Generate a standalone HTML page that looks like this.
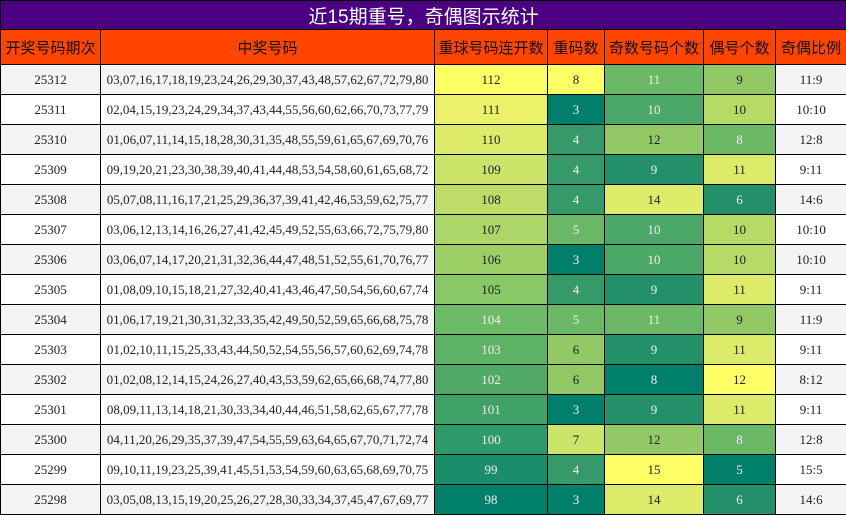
<!DOCTYPE html><html><head><meta charset="utf-8"><style>
body{margin:0;width:846px;height:515px;overflow:hidden;background:#fff}
table{border-collapse:collapse;table-layout:fixed;width:846px;font-family:"Liberation Serif","Noto Serif CJK SC",serif;font-size:13px}
td,th{border:1px solid #000;text-align:center;padding:0;white-space:nowrap;overflow:hidden}
.t{background:#4B0082;color:#fff;height:28px;font-family:"Liberation Sans","Noto Sans CJK SC",sans-serif;font-size:19px;font-weight:normal}
.h th{background:#FF4500;color:#111;height:34px;font-family:"Liberation Sans","Noto Sans CJK SC",sans-serif;font-size:15px;font-weight:normal}
tr.r td{height:29px;color:#222}
tr.r:nth-child(odd) td{background:#F4F4F4}
tr.r td.w{color:#eee}
</style></head><body><table>
<colgroup><col style="width:100px"><col style="width:334px"><col style="width:113px"><col style="width:57px"><col style="width:99px"><col style="width:72px"><col style="width:71px"></colgroup>
<tr><th class="t" colspan="7">近15期重号，奇偶图示统计</th></tr>
<tr class="h"><th>开奖号码期次</th><th>中奖号码</th><th>重球号码连开数</th><th>重码数</th><th>奇数号码个数</th><th>偶号个数</th><th>奇偶比例</th></tr>
<tr class="r"><td>25312</td><td>03,07,16,17,18,19,23,24,26,29,30,37,43,48,57,62,67,72,79,80</td><td style="background:#FFFF66">112</td><td style="background:#FFFF66">8</td><td class="w" style="background:#6AB866">11</td><td style="background:#93C866">9</td><td>11:9</td></tr>
<tr class="r"><td>25311</td><td>02,04,15,19,23,24,29,34,37,43,44,55,56,60,62,66,70,73,77,79</td><td style="background:#EBF26A">111</td><td class="w" style="background:#00806A">3</td><td class="w" style="background:#4CA868">10</td><td style="background:#B5DA66">10</td><td>10:10</td></tr>
<tr class="r"><td>25310</td><td>01,06,07,11,14,15,18,28,30,31,35,48,55,59,61,65,67,69,70,76</td><td style="background:#DDEB6A">110</td><td class="w" style="background:#36996A">4</td><td style="background:#93C866">12</td><td class="w" style="background:#6AB866">8</td><td>12:8</td></tr>
<tr class="r"><td>25309</td><td>09,19,20,21,23,30,38,39,40,41,44,48,53,54,58,60,61,65,68,72</td><td style="background:#CCE46A">109</td><td class="w" style="background:#36996A">4</td><td class="w" style="background:#24906A">9</td><td style="background:#DDEB6A">11</td><td>9:11</td></tr>
<tr class="r"><td>25308</td><td>05,07,08,11,16,17,21,25,29,36,37,39,41,42,46,53,59,62,75,77</td><td style="background:#BDDD68">108</td><td class="w" style="background:#36996A">4</td><td style="background:#DDEB6A">14</td><td class="w" style="background:#24906A">6</td><td>14:6</td></tr>
<tr class="r"><td>25307</td><td>03,06,12,13,14,16,26,27,41,42,45,49,52,55,63,66,72,75,79,80</td><td style="background:#ACD667">107</td><td class="w" style="background:#6AB866">5</td><td class="w" style="background:#4CA868">10</td><td style="background:#B5DA66">10</td><td>10:10</td></tr>
<tr class="r"><td>25306</td><td>03,06,07,14,17,20,21,31,32,36,44,47,48,51,52,55,61,70,76,77</td><td style="background:#9CCF66">106</td><td class="w" style="background:#00806A">3</td><td class="w" style="background:#4CA868">10</td><td style="background:#B5DA66">10</td><td>10:10</td></tr>
<tr class="r"><td>25305</td><td>01,08,09,10,15,18,21,27,32,40,41,43,46,47,50,54,56,60,67,74</td><td style="background:#8AC766">105</td><td class="w" style="background:#36996A">4</td><td class="w" style="background:#24906A">9</td><td style="background:#DDEB6A">11</td><td>9:11</td></tr>
<tr class="r"><td>25304</td><td>01,06,17,19,21,30,31,32,33,35,42,49,50,52,59,65,66,68,75,78</td><td class="w" style="background:#6CB966">104</td><td class="w" style="background:#6AB866">5</td><td class="w" style="background:#6AB866">11</td><td style="background:#93C866">9</td><td>11:9</td></tr>
<tr class="r"><td>25303</td><td>01,02,10,11,15,25,33,43,44,50,52,54,55,56,57,60,62,69,74,78</td><td class="w" style="background:#5EB266">103</td><td style="background:#93C866">6</td><td class="w" style="background:#24906A">9</td><td style="background:#DDEB6A">11</td><td>9:11</td></tr>
<tr class="r"><td>25302</td><td>01,02,08,12,14,15,24,26,27,40,43,53,59,62,65,66,68,74,77,80</td><td class="w" style="background:#50AA66">102</td><td style="background:#93C866">6</td><td class="w" style="background:#00806A">8</td><td style="background:#FFFF66">12</td><td>8:12</td></tr>
<tr class="r"><td>25301</td><td>08,09,11,13,14,18,21,30,33,34,40,44,46,51,58,62,65,67,77,78</td><td class="w" style="background:#40A266">101</td><td class="w" style="background:#00806A">3</td><td class="w" style="background:#24906A">9</td><td style="background:#DDEB6A">11</td><td>9:11</td></tr>
<tr class="r"><td>25300</td><td>04,11,20,26,29,35,37,39,47,54,55,59,63,64,65,67,70,71,72,74</td><td class="w" style="background:#2E996A">100</td><td style="background:#CBE56A">7</td><td style="background:#93C866">12</td><td class="w" style="background:#6AB866">8</td><td>12:8</td></tr>
<tr class="r"><td>25299</td><td>09,10,11,19,23,25,39,41,45,51,53,54,59,60,63,65,68,69,70,75</td><td class="w" style="background:#1A8E6A">99</td><td class="w" style="background:#36996A">4</td><td style="background:#FFFF66">15</td><td class="w" style="background:#00806A">5</td><td>15:5</td></tr>
<tr class="r"><td>25298</td><td>03,05,08,13,15,19,20,25,26,27,28,30,33,34,37,45,47,67,69,77</td><td class="w" style="background:#00806A">98</td><td class="w" style="background:#00806A">3</td><td style="background:#DDEB6A">14</td><td class="w" style="background:#24906A">6</td><td>14:6</td></tr>
</table></body></html>
